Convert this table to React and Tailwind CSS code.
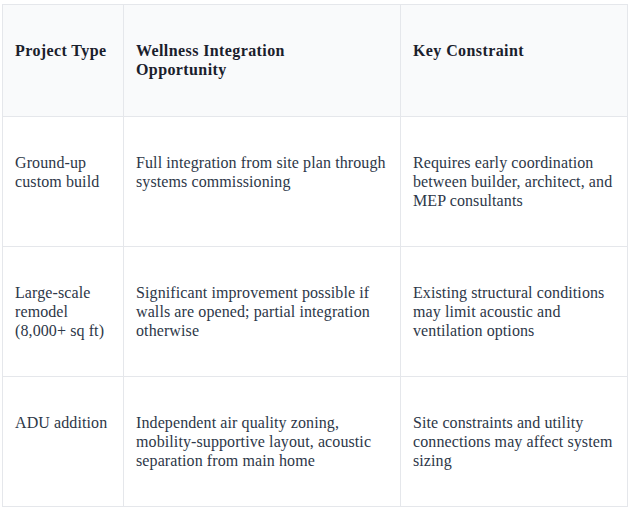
const rows = [
  {
    type: 'Ground-up custom build',
    opportunity: 'Full integration from site plan through systems commissioning',
    constraint: 'Requires early coordination between builder, architect, and MEP consultants',
  },
  {
    type: 'Large-scale remodel (8,000+ sq ft)',
    opportunity: 'Significant improvement possible if walls are opened; partial integration otherwise',
    constraint: 'Existing structural conditions may limit acoustic and ventilation options',
  },
  {
    type: 'ADU addition',
    opportunity: 'Independent air quality zoning, mobility-supportive layout, acoustic separation from main home',
    constraint: 'Site constraints and utility connections may affect system sizing',
  },
];

const App = () => {
  return (
    <div className="pl-[2px] pt-[4px] bg-white font-['Liberation_Serif',serif]">
      <table className="w-[625px] border-collapse table-fixed text-[16px] leading-[19px] tracking-[0.1px]">
        <colgroup>
          <col className="w-[121px]" />
          <col className="w-[277px]" />
          <col className="w-[227px]" />
        </colgroup>
        <thead>
          <tr className="bg-[#f9fafb] tracking-[0.4px]">
            <th className="border border-[#e5e7eb] px-3 pt-9 pb-[37px] text-left align-top font-bold text-[#1a202c]">Project Type</th>
            <th className="border border-[#e5e7eb] px-3 pt-9 pb-[37px] pr-12 text-left align-top font-bold text-[#1a202c]">Wellness Integration Opportunity</th>
            <th className="border border-[#e5e7eb] px-3 pt-9 pb-[37px] text-left align-top font-bold text-[#1a202c]">Key Constraint</th>
          </tr>
        </thead>
        <tbody>
          {rows.map((r) => (
            <tr key={r.type}>
              <td className="border border-[#e5e7eb] px-3 pt-9 pb-9 align-top text-[#2d3748]">{r.type}</td>
              <td className="border border-[#e5e7eb] px-3 pt-9 pb-9 align-top text-[#2d3748]">{r.opportunity}</td>
              <td className="border border-[#e5e7eb] px-3 pt-9 pb-9 align-top text-[#2d3748]">{r.constraint}</td>
            </tr>
          ))}
        </tbody>
      </table>
    </div>
  );
};

export default App;
